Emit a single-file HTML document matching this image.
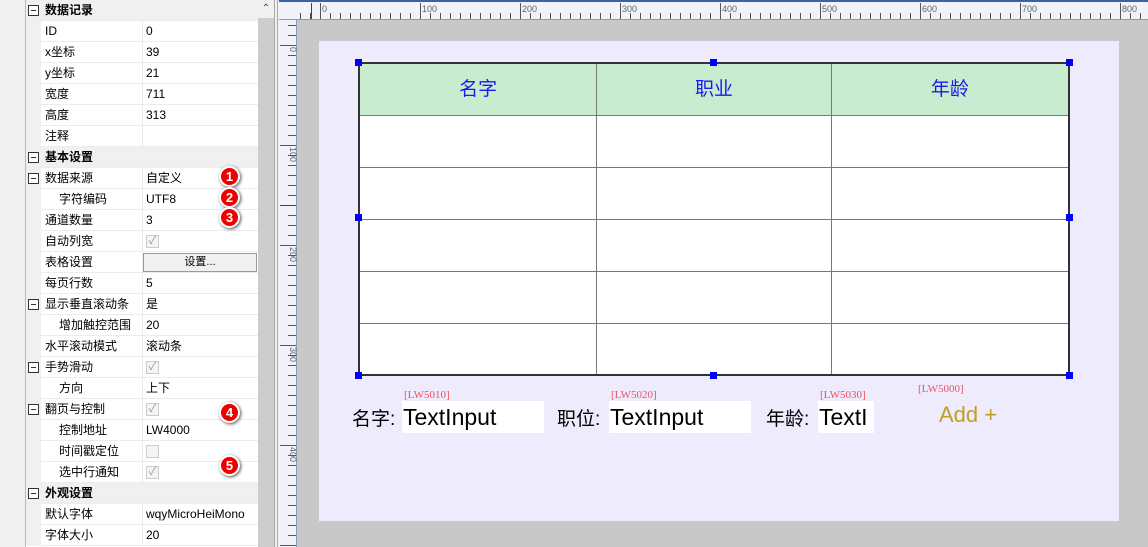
<!DOCTYPE html>
<html><head><meta charset="utf-8"><style>
*{margin:0;padding:0;box-sizing:border-box}
body{width:1148px;height:547px;overflow:hidden;background:#f0f0f0;font-family:"Liberation Sans","Noto Sans CJK SC",sans-serif;font-size:12px;color:#000;position:relative}
.abs{position:absolute}
#panel{left:26px;top:0;width:232px;height:547px;background:#fff}
.row{position:absolute;left:0;width:232px;height:21px;border-bottom:1px solid #ececec}
.row.g{background:#f0f0f0;font-weight:bold}
.row .gut{position:absolute;left:0;top:0;width:15px;height:21px;background:#f0f0f0}
.row .lab{position:absolute;left:19px;top:0;line-height:20px;white-space:nowrap}
.row .lab.i{left:33px}
.row .val{position:absolute;left:120px;top:0;line-height:20px;white-space:nowrap}
.row .sep{position:absolute;left:116px;top:0;width:1px;height:21px;background:#ececec}
.box{position:absolute;left:2px;top:5px;width:11px;height:11px;border:1px solid #333;background:#fff}
.box:after{content:"";position:absolute;left:2px;top:4px;width:5px;height:1px;background:#333}
.chk{position:absolute;left:120px;top:4px;width:13px;height:13px;border:1px solid #ccc;background:#f4f4f4;color:#999;font-size:11px;line-height:11px;text-align:center}
.badge{position:absolute;width:21px;height:21px;border-radius:50%;background:#e00;border:2px solid #fff;box-shadow:1px 1px 3px #555;color:#fff;font-weight:bold;font-size:13px;line-height:17px;text-align:center}
.hr td{background:#c8ecd0;color:#1a1aee;font-size:19px;text-align:center;height:52px;padding-bottom:4px}
table{border-collapse:collapse}
td{border:1px solid #777;background:#fff;height:52px}
.h{position:absolute;width:7px;height:7px;background:#00f}
.lw{position:absolute;color:#f05060;font-family:"Liberation Serif",serif;font-size:11px}
.ti{position:absolute;background:#fff;height:32px;font-size:23px;line-height:32px;padding-left:1px;font-family:"Liberation Sans",sans-serif;overflow:hidden;white-space:nowrap}
.lb{position:absolute;font-size:19px;font-family:"Liberation Sans","Noto Sans CJK SC",sans-serif}
</style></head><body>
<div class="abs" style="left:0;top:0;width:26px;height:547px;background:#f0f0f0"></div>
<div class="abs" style="left:25px;top:0;width:1px;height:547px;background:#bbb"></div>
<div id="panel" class="abs">
<div class="row g" style="top:0"><div class="box"></div><span class="lab">数据记录</span></div>
<div class="row" style="top:21px"><div class="gut"></div><span class="lab">ID</span><div class="sep"></div><span class="val">0</span></div>
<div class="row" style="top:42px"><div class="gut"></div><span class="lab">x坐标</span><div class="sep"></div><span class="val">39</span></div>
<div class="row" style="top:63px"><div class="gut"></div><span class="lab">y坐标</span><div class="sep"></div><span class="val">21</span></div>
<div class="row" style="top:84px"><div class="gut"></div><span class="lab">宽度</span><div class="sep"></div><span class="val">711</span></div>
<div class="row" style="top:105px"><div class="gut"></div><span class="lab">高度</span><div class="sep"></div><span class="val">313</span></div>
<div class="row" style="top:126px"><div class="gut"></div><span class="lab">注释</span><div class="sep"></div></div>
<div class="row g" style="top:147px"><div class="box"></div><span class="lab">基本设置</span></div>
<div class="row" style="top:168px"><div class="gut"><div class="box"></div></div><span class="lab">数据来源</span><div class="sep"></div><span class="val">自定义</span></div>
<div class="row" style="top:189px"><div class="gut"></div><span class="lab i">字符编码</span><div class="sep"></div><span class="val">UTF8</span></div>
<div class="row" style="top:210px"><div class="gut"></div><span class="lab">通道数量</span><div class="sep"></div><span class="val">3</span></div>
<div class="row" style="top:231px"><div class="gut"></div><span class="lab">自动列宽</span><div class="sep"></div><div class="chk">✓</div></div>
<div class="row" style="top:252px"><div class="gut"></div><span class="lab">表格设置</span><div class="sep"></div><div class="abs" style="left:117px;top:1px;width:114px;height:19px;border:1px solid #999;background:#f0f0f0;text-align:center;line-height:17px;font-size:11px">设置...</div></div>
<div class="row" style="top:273px"><div class="gut"></div><span class="lab">每页行数</span><div class="sep"></div><span class="val">5</span></div>
<div class="row" style="top:294px"><div class="gut"><div class="box"></div></div><span class="lab">显示垂直滚动条</span><div class="sep"></div><span class="val">是</span></div>
<div class="row" style="top:315px"><div class="gut"></div><span class="lab i">增加触控范围</span><div class="sep"></div><span class="val">20</span></div>
<div class="row" style="top:336px"><div class="gut"></div><span class="lab">水平滚动模式</span><div class="sep"></div><span class="val">滚动条</span></div>
<div class="row" style="top:357px"><div class="gut"><div class="box"></div></div><span class="lab">手势滑动</span><div class="sep"></div><div class="chk">✓</div></div>
<div class="row" style="top:378px"><div class="gut"></div><span class="lab i">方向</span><div class="sep"></div><span class="val">上下</span></div>
<div class="row" style="top:399px"><div class="gut"><div class="box"></div></div><span class="lab">翻页与控制</span><div class="sep"></div><div class="chk">✓</div></div>
<div class="row" style="top:420px"><div class="gut"></div><span class="lab i">控制地址</span><div class="sep"></div><span class="val">LW4000</span></div>
<div class="row" style="top:441px"><div class="gut"></div><span class="lab i">时间戳定位</span><div class="sep"></div><div class="chk"></div></div>
<div class="row" style="top:462px"><div class="gut"></div><span class="lab i">选中行通知</span><div class="sep"></div><div class="chk">✓</div></div>
<div class="row g" style="top:483px"><div class="box"></div><span class="lab">外观设置</span></div>
<div class="row" style="top:504px"><div class="gut"></div><span class="lab">默认字体</span><div class="sep"></div><span class="val">wqyMicroHeiMono</span></div>
<div class="row" style="top:525px"><div class="gut"></div><span class="lab">字体大小</span><div class="sep"></div><span class="val">20</span></div>
</div>
<div class="badge" style="left:219px;top:166px">1</div>
<div class="badge" style="left:219px;top:187px">2</div>
<div class="badge" style="left:219px;top:207px">3</div>
<div class="badge" style="left:219px;top:402px">4</div>
<div class="badge" style="left:219px;top:455px">5</div>
<div class="abs" style="left:258px;top:0;width:16px;height:547px;background:#cdcdcd"></div>
<div class="abs" style="left:258px;top:0;width:16px;height:18px;background:#f0f0f0;text-align:center;font-size:10px;line-height:18px;color:#444">⌃</div>
<div class="abs" style="left:274px;top:0;width:1px;height:547px;background:#aaa"></div>
<div class="abs" style="left:277px;top:0;width:1px;height:547px;background:#aaa"></div>
<div class="abs" style="left:279px;top:0;width:869px;height:20px;background:#f2f3f8;border-top:2px solid #3a62a8;border-bottom:1px solid #8a9ab8"></div>
<div class="abs" style="left:279px;top:20px;width:18px;height:527px;background:#f2f3f8;border-right:1px solid #8a9ab8"></div>
<svg class="abs" style="left:0;top:0" width="1148" height="547" id="rs"></svg>
<div class="abs" style="left:297px;top:20px;width:851px;height:527px;background:#c8c8c8"></div>
<div class="abs" style="left:319px;top:41px;width:800px;height:480px;background:#eeebfd"></div>
<table class="abs" style="left:358px;top:62px;width:712px;border:2px solid #333">
<tr class="hr"><td>名字</td><td>职业</td><td>年龄</td></tr>
<tr><td></td><td></td><td></td></tr><tr><td></td><td></td><td></td></tr><tr><td></td><td></td><td></td></tr><tr><td></td><td></td><td></td></tr><tr><td></td><td></td><td></td></tr>
</table>
<div class="h" style="left:355px;top:59px"></div><div class="h" style="left:710px;top:59px"></div><div class="h" style="left:1066px;top:59px"></div>
<div class="h" style="left:355px;top:214px"></div><div class="h" style="left:1066px;top:214px"></div>
<div class="h" style="left:355px;top:372px"></div><div class="h" style="left:710px;top:372px"></div><div class="h" style="left:1066px;top:372px"></div>
<div class="lw" style="left:404px;top:389px">[LW5010]</div>
<div class="lw" style="left:611px;top:389px">[LW5020]</div>
<div class="lw" style="left:820px;top:389px">[LW5030]</div>
<div class="lw" style="left:918px;top:383px">[LW5000]</div>
<div class="lb" style="left:352px;top:404px">名字:</div>
<div class="ti" style="left:402px;top:401px;width:142px">TextInput</div>
<div class="lb" style="left:557px;top:404px">职位:</div>
<div class="ti" style="left:609px;top:401px;width:142px">TextInput</div>
<div class="lb" style="left:766px;top:404px">年龄:</div>
<div class="ti" style="left:818px;top:401px;width:56px">TextI</div>
<div class="abs" style="left:939px;top:402px;font-size:22px;color:#c0a020;font-family:'Liberation Sans',sans-serif">Add +</div>
<script>
var s=document.getElementById('rs'),h='';
for(var u=-40;u<=830;u+=10){var x=320+u;if(x<297)continue;var big=u%100==0;
h+='<line x1="'+(x+.5)+'" y1="'+(big?3:13)+'" x2="'+(x+.5)+'" y2="19" stroke="#555"/>';
if(big)h+='<text x="'+(x+2)+'" y="12" font-size="9" fill="#567" font-family="Liberation Sans">'+u+'</text>';}
for(var u=-20;u<=500;u+=10){var y=45+u;if(y<21)continue;var big=u%100==0;
h+='<line x1="'+(big?280:288)+'" y1="'+(y+.5)+'" x2="296" y2="'+(y+.5)+'" stroke="#555"/>';
if(big)h+='<text transform="translate(290,'+(y+2)+') rotate(90)" font-size="9" fill="#567" font-family="Liberation Sans">'+u+'</text>';}
h+='<line x1="311.5" y1="3" x2="311.5" y2="19" stroke="#d00"/><line x1="280" y1="205.5" x2="296" y2="205.5" stroke="#d00"/>';
s.innerHTML=h;
</script>
</body></html>
